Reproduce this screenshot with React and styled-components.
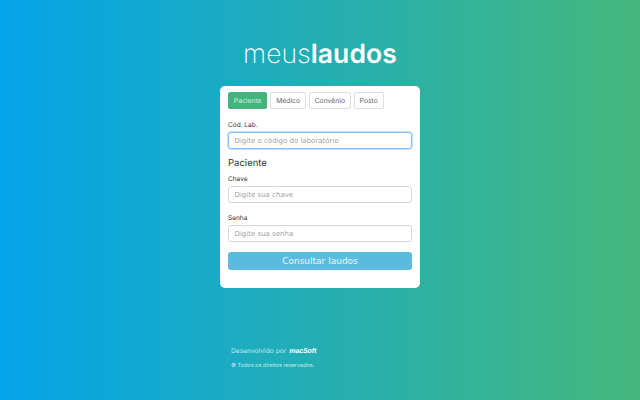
import React from 'react'
import styled, { createGlobalStyle } from 'styled-components'

const GlobalStyle = createGlobalStyle`
  html, body {
    margin: 0;
    height: 100%;
  }
  body {
    font-family: "Inter", "Liberation Sans", sans-serif;
    text-rendering: geometricPrecision;
  }
`

const Page = styled.div`
  width: 640px;
  height: 400px;
  overflow: hidden;
  display: flex;
  flex-direction: column;
  align-items: center;
  background: linear-gradient(90deg, #04a4ea 0%, #45b87c 100%);
`

const Logo = styled.h1`
  margin: 36px 0 0;
  height: 50px;
  font-size: 26.5px;
  line-height: 37px;
  font-weight: 250;
  color: #fff;
  letter-spacing: 0.1px;

  b {
    font-weight: 600;
  }
`

const Card = styled.div`
  box-sizing: border-box;
  width: 200px;
  height: 202px;
  padding: 6px 8px 0;
  background: #fff;
  border-radius: 5px;
`

const Tabs = styled.div`
  display: flex;
  gap: 3px;
`

const Tab = styled.div`
  box-sizing: border-box;
  height: 17px;
  padding: 0 4.8px;
  display: flex;
  align-items: center;
  font-size: 6.8px;
  border-radius: 2px;
  border: 1px solid ${p => (p.$active ? '#43b47c' : '#dcdfe2')};
  background: ${p => (p.$active ? '#43b47c' : '#fff')};
  color: ${p => (p.$active ? '#d5efe2' : '#666')};
`

const Label = styled.div`
  font-size: 6.5px;
  line-height: 9px;
  color: #333;
  margin-bottom: 2px;
`

const Field = styled.div`
  margin-top: ${p => p.$top}px;
`

const Input = styled.input`
  display: block;
  box-sizing: border-box;
  width: 100%;
  height: 17px;
  padding: 0 5.5px;
  font-family: "DejaVu Sans", sans-serif;
  font-size: 7px;
  color: #555;
  background: #fff;
  border-radius: 3px;
  outline: none;
  border: 1px solid ${p => (p.$focused ? '#80bdff' : '#d5d8db')};
  box-shadow: ${p => (p.$focused ? '0 0 0 1px rgba(0, 123, 255, 0.2)' : 'none')};

  &::placeholder {
    color: #9da1a5;
    opacity: 1;
  }
`

const Heading = styled.div`
  margin-top: 9px;
  font-size: 9.5px;
  line-height: 12px;
  color: #333;
`

const Submit = styled.button`
  display: block;
  box-sizing: border-box;
  width: 100%;
  height: 18px;
  margin-top: 10px;
  padding: 0;
  border: none;
  border-radius: 3px;
  background: #5bbbde;
  color: #eaf7fb;
  font-family: "DejaVu Sans", sans-serif;
  font-size: 9px;
`

const Footer = styled.div`
  width: 178px;
  margin-top: 57px;
  color: #c6ece6;
`

const DevLine = styled.div`
  display: flex;
  align-items: center;
  gap: 3px;
  height: 12px;
  font-size: 6.5px;
  letter-spacing: 0.1px;
`

const Brand = styled.span`
  font-family: "Liberation Sans", sans-serif;
  font-size: 7px;
  font-weight: 700;
  font-style: italic;
  color: #fff;
  letter-spacing: -0.1px;
`

const Rights = styled.div`
  margin-top: 4px;
  font-size: 5.5px;
  line-height: 10px;
`

export default function App() {
  return (
    <Page>
      <GlobalStyle />
      <Logo>meus<b>laudos</b></Logo>
      <Card>
        <Tabs>
          <Tab $active>Paciente</Tab>
          <Tab>Médico</Tab>
          <Tab>Convênio</Tab>
          <Tab>Posto</Tab>
        </Tabs>
        <Field $top={12}>
          <Label>Cód. Lab.</Label>
          <Input $focused placeholder="Digite o código do laboratório" />
        </Field>
        <Heading>Paciente</Heading>
        <Field $top={5}>
          <Label>Chave</Label>
          <Input placeholder="Digite sua chave" />
        </Field>
        <Field $top={11}>
          <Label>Senha</Label>
          <Input placeholder="Digite sua senha" />
        </Field>
        <Submit>Consultar laudos</Submit>
      </Card>
      <Footer>
        <DevLine>Desenvolvido por <Brand>macSoft</Brand></DevLine>
        <Rights>© Todos os direitos reservados.</Rights>
      </Footer>
    </Page>
  )
}
